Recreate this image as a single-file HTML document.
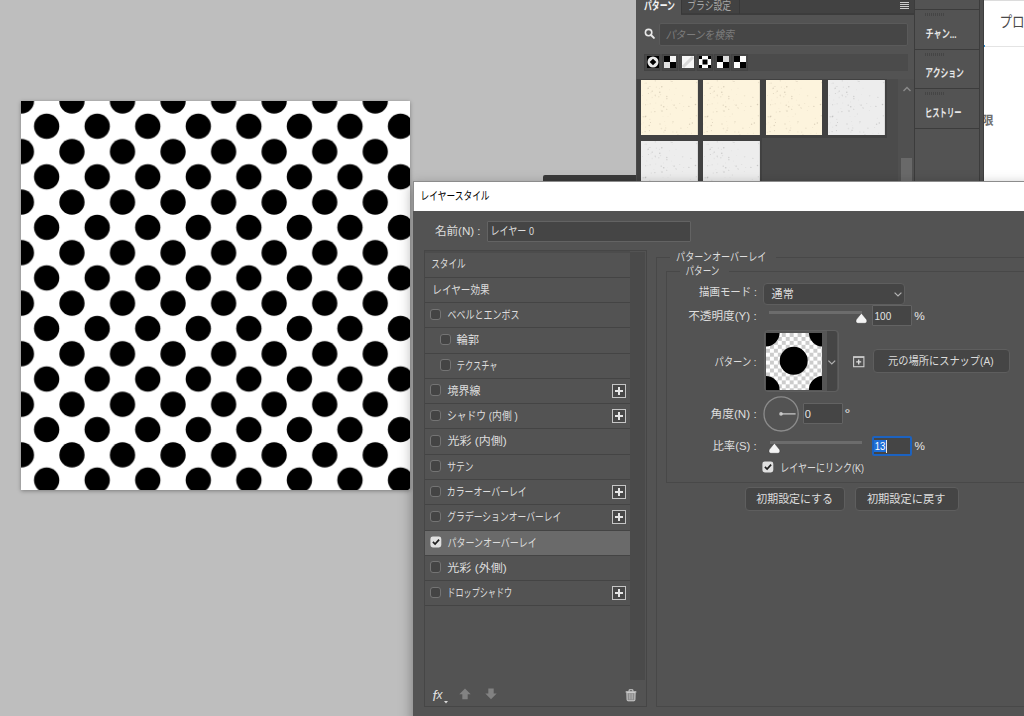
<!DOCTYPE html><html lang="ja"><head><meta charset="utf-8"><title>レイヤースタイル</title><style>

html,body{margin:0;padding:0;background:#bebebe;}
#root{position:relative;width:1024px;height:716px;overflow:hidden;background:#bebebe;font-family:"Liberation Sans",sans-serif;}
#root>div,#root>svg,#root>span{position:absolute;}
#root>svg{display:block;overflow:visible;}
.lt{font-size:11.5px;line-height:13px;color:#e6e6e6;white-space:nowrap;}
#tx{left:0;top:0;pointer-events:none;}
#tx .t{font-family:"Liberation Sans","Noto Sans CJK JP",sans-serif;font-size:11.5px;fill:#dddddd;}

</style></head><body><div id="root">
<div class="cv" style="left:21px;top:101px;width:389px;height:389px;background:#fff;box-shadow:0 1px 4px rgba(0,0,0,.35);"><svg width="389" height="389" style="display:block"><defs><pattern id="dots" x="0.4" y="0" width="50.55" height="50.55" patternUnits="userSpaceOnUse"><circle cx="0" cy="0" r="12.65"/><circle cx="50.55" cy="0" r="12.65"/><circle cx="0" cy="50.55" r="12.65"/><circle cx="50.55" cy="50.55" r="12.65"/><circle cx="25.275" cy="25.275" r="12.65"/></pattern></defs><rect width="389" height="389" fill="url(#dots)"/></svg></div>
<div style="left:543px;top:175px;width:94px;height:8px;background:#3a3a3a;border-radius:2px 0 0 0;"></div>
<div style="left:636px;top:0px;width:279px;height:182px;background:#535353;"></div>
<div style="left:636px;top:0px;width:279px;height:14px;background:#424242;"></div>
<div style="left:681px;top:13.4px;width:234px;height:1.2px;background:#3c3c3c;"></div>
<div style="left:636px;top:0px;width:45px;height:15px;background:#535353;"></div>
<div style="left:739px;top:0px;width:1px;height:14px;background:#383838;"></div>
<div style="left:681px;top:0px;width:1px;height:14px;background:#383838;"></div>
<div style="left:899.6px;top:2px;width:9.8px;height:1px;background:#cecece;"></div>
<div style="left:899.6px;top:4.02px;width:9.8px;height:1px;background:#cecece;"></div>
<div style="left:899.6px;top:6.04px;width:9.8px;height:1px;background:#cecece;"></div>
<div style="left:899.6px;top:8.06px;width:9.8px;height:1px;background:#cecece;"></div>
<div style="left:658.6px;top:23.1px;width:249px;height:22.5px;background:#464646;border:1.1px solid #5a5a5a;box-sizing:border-box;border-radius:2px;"></div>
<svg style="left:643px;top:27px" width="14" height="14" viewBox="0 0 14 14"><circle cx="5.6" cy="5.6" r="3.2" fill="none" stroke="#e8e8e8" stroke-width="1.6"/><path d="M8 8 L10.9 10.9" stroke="#e8e8e8" stroke-width="2" stroke-linecap="round"/></svg>
<div style="left:644px;top:54px;width:263.5px;height:16.5px;background:#4b4b4b;"></div>
<div style="left:644.2px;top:54px;width:16.3px;height:16.5px;background:#484848;border:1px solid #434343;box-sizing:border-box;"></div>
<div style="left:661.64px;top:54px;width:16.3px;height:16.5px;background:#484848;border:1px solid #434343;box-sizing:border-box;"></div>
<div style="left:679.08px;top:54px;width:16.3px;height:16.5px;background:#484848;border:1px solid #434343;box-sizing:border-box;"></div>
<div style="left:696.52px;top:54px;width:16.3px;height:16.5px;background:#484848;border:1px solid #434343;box-sizing:border-box;"></div>
<div style="left:713.96px;top:54px;width:16.3px;height:16.5px;background:#484848;border:1px solid #434343;box-sizing:border-box;"></div>
<div style="left:731.4px;top:54px;width:16.3px;height:16.5px;background:#484848;border:1px solid #434343;box-sizing:border-box;"></div>
<div style="left:636px;top:78.5px;width:262.5px;height:103.5px;background:#4b4b4b;"></div>
<div style="left:898.3px;top:78.5px;width:16.7px;height:103.5px;background:#505050;"></div>
<div style="left:900.9px;top:158px;width:11.4px;height:24px;background:#696969;"></div>
<svg style="left:902px;top:85px" width="10" height="8" viewBox="0 0 10 8"><path d="M1.5 6 L5 2.5 L8.5 6" fill="none" stroke="#8a8a8a" stroke-width="1.4"/></svg>
<svg style="left:0;top:0" width="0" height="0"><defs><g id="spk"><circle cx="18.5" cy="8.3" r="0.63" opacity="0.18"/><circle cx="30.5" cy="20.1" r="0.33" opacity="0.35"/><circle cx="2.1" cy="23.9" r="0.33" opacity="0.19"/><circle cx="24.2" cy="45.5" r="0.36" opacity="0.24"/><circle cx="35.8" cy="52.1" r="0.59" opacity="0.31"/><circle cx="55.6" cy="2.6" r="0.73" opacity="0.27"/><circle cx="8.2" cy="6.5" r="0.45" opacity="0.48"/><circle cx="10.3" cy="32.0" r="0.62" opacity="0.30"/><circle cx="31.2" cy="3.5" r="0.33" opacity="0.23"/><circle cx="38.8" cy="23.5" r="0.46" opacity="0.38"/><circle cx="25.8" cy="16.5" r="0.70" opacity="0.43"/><circle cx="13.9" cy="31.6" r="0.56" opacity="0.50"/><circle cx="41.6" cy="15.8" r="0.79" opacity="0.20"/><circle cx="23.8" cy="41.6" r="0.38" opacity="0.35"/><circle cx="2.2" cy="36.8" r="0.68" opacity="0.38"/><circle cx="49.9" cy="17.3" r="0.65" opacity="0.39"/><circle cx="33.1" cy="25.1" r="0.72" opacity="0.53"/><circle cx="27.0" cy="36.5" r="0.33" opacity="0.43"/><circle cx="36.9" cy="54.6" r="0.71" opacity="0.26"/><circle cx="22.0" cy="36.8" r="0.31" opacity="0.33"/><circle cx="9.6" cy="6.4" r="0.33" opacity="0.46"/><circle cx="7.4" cy="13.6" r="0.50" opacity="0.50"/><circle cx="4.6" cy="24.7" r="0.57" opacity="0.50"/><circle cx="46.7" cy="47.5" r="0.44" opacity="0.32"/><circle cx="20.4" cy="48.6" r="0.78" opacity="0.21"/><circle cx="10.0" cy="12.8" r="0.42" opacity="0.34"/><circle cx="33.6" cy="14.5" r="0.30" opacity="0.32"/><circle cx="21.0" cy="31.1" r="0.78" opacity="0.43"/><circle cx="29.4" cy="34.0" r="0.64" opacity="0.17"/><circle cx="51.3" cy="42.9" r="0.74" opacity="0.47"/><circle cx="22.4" cy="21.9" r="0.35" opacity="0.40"/><circle cx="3.5" cy="3.7" r="0.40" opacity="0.21"/><circle cx="19.4" cy="2.9" r="0.30" opacity="0.21"/><circle cx="5.8" cy="20.0" r="0.31" opacity="0.50"/><circle cx="35.0" cy="8.2" r="0.43" opacity="0.29"/><circle cx="20.8" cy="6.8" r="0.72" opacity="0.55"/><circle cx="26.6" cy="26.6" r="0.34" opacity="0.19"/><circle cx="19.5" cy="14.6" r="0.71" opacity="0.21"/><circle cx="1.3" cy="52.3" r="0.56" opacity="0.21"/><circle cx="31.0" cy="1.5" r="0.56" opacity="0.54"/><circle cx="49.2" cy="38.3" r="0.43" opacity="0.30"/><circle cx="9.5" cy="42.5" r="0.57" opacity="0.46"/><circle cx="18.8" cy="12.3" r="0.71" opacity="0.54"/><circle cx="48.6" cy="44.3" r="0.71" opacity="0.45"/><circle cx="12.9" cy="28.5" r="0.48" opacity="0.16"/><circle cx="1.6" cy="15.4" r="0.43" opacity="0.43"/><circle cx="54.5" cy="24.6" r="0.77" opacity="0.55"/><circle cx="54.4" cy="20.1" r="0.41" opacity="0.24"/><circle cx="11.2" cy="11.2" r="0.61" opacity="0.51"/><circle cx="47.9" cy="26.4" r="0.63" opacity="0.47"/><circle cx="4.8" cy="36.3" r="0.75" opacity="0.46"/><circle cx="42.8" cy="26.3" r="0.39" opacity="0.47"/><circle cx="19.0" cy="44.0" r="0.79" opacity="0.31"/><circle cx="22.9" cy="52.1" r="0.66" opacity="0.22"/><circle cx="7.2" cy="8.3" r="0.75" opacity="0.47"/><circle cx="8.3" cy="45.5" r="0.79" opacity="0.41"/><circle cx="20.0" cy="30.2" r="0.37" opacity="0.16"/><circle cx="55.3" cy="35.7" r="0.56" opacity="0.52"/><circle cx="24.7" cy="47.9" r="0.71" opacity="0.23"/><circle cx="14.4" cy="16.1" r="0.42" opacity="0.38"/><circle cx="14.8" cy="23.0" r="0.37" opacity="0.51"/><circle cx="20.2" cy="25.2" r="0.59" opacity="0.51"/><circle cx="24.0" cy="50.5" r="0.55" opacity="0.36"/><circle cx="29.8" cy="1.0" r="0.52" opacity="0.22"/><circle cx="0.2" cy="44.0" r="0.39" opacity="0.34"/><circle cx="41.3" cy="30.6" r="0.46" opacity="0.36"/><circle cx="31.7" cy="43.1" r="0.35" opacity="0.37"/><circle cx="14.2" cy="15.2" r="0.69" opacity="0.35"/><circle cx="32.0" cy="41.8" r="0.76" opacity="0.33"/><circle cx="34.9" cy="27.8" r="0.56" opacity="0.43"/><circle cx="25.8" cy="29.3" r="0.54" opacity="0.53"/><circle cx="39.9" cy="48.2" r="0.77" opacity="0.25"/><circle cx="31.9" cy="51.9" r="0.72" opacity="0.20"/><circle cx="6.9" cy="24.3" r="0.34" opacity="0.25"/><circle cx="4.2" cy="36.8" r="0.69" opacity="0.51"/><circle cx="8.8" cy="39.4" r="0.63" opacity="0.21"/><circle cx="50.3" cy="53.2" r="0.41" opacity="0.53"/><circle cx="22.7" cy="26.8" r="0.79" opacity="0.48"/><circle cx="9.2" cy="23.7" r="0.56" opacity="0.29"/><circle cx="11.2" cy="17.5" r="0.66" opacity="0.16"/><circle cx="31.6" cy="24.2" r="0.31" opacity="0.28"/><circle cx="35.6" cy="28.2" r="0.33" opacity="0.54"/><circle cx="44.9" cy="53.4" r="0.35" opacity="0.26"/><circle cx="2.3" cy="42.8" r="0.44" opacity="0.20"/><circle cx="24.1" cy="50.1" r="0.71" opacity="0.25"/><circle cx="8.5" cy="50.6" r="0.59" opacity="0.43"/><circle cx="5.1" cy="3.2" r="0.64" opacity="0.32"/><circle cx="4.1" cy="51.6" r="0.62" opacity="0.47"/><circle cx="4.8" cy="47.1" r="0.33" opacity="0.50"/><circle cx="25.9" cy="18.7" r="0.58" opacity="0.52"/><circle cx="15.3" cy="7.1" r="0.56" opacity="0.25"/><circle cx="6.2" cy="8.9" r="0.33" opacity="0.23"/><circle cx="17.8" cy="16.8" r="0.68" opacity="0.27"/><circle cx="28.5" cy="9.8" r="0.47" opacity="0.16"/><circle cx="14.3" cy="0.8" r="0.67" opacity="0.37"/></g></defs></svg>
<div style="left:637.3px;top:78.5px;width:249.5px;height:59px;background:#414141;"></div>
<div style="left:637.3px;top:138.3px;width:125px;height:44px;background:#414141;"></div>
<svg style="left:641px;top:79.9px;overflow:hidden" width="56.9" height="55"><rect width="100%" height="100%" fill="#fdf4dd"/><use href="#spk" fill="#b9ad98"/></svg>
<svg style="left:703.3px;top:79.9px;overflow:hidden" width="56.9" height="55"><rect width="100%" height="100%" fill="#fdf4dd"/><use href="#spk" fill="#b9ad98"/></svg>
<svg style="left:765.6px;top:79.9px;overflow:hidden" width="56.9" height="55"><rect width="100%" height="100%" fill="#fdf4dd"/><use href="#spk" fill="#b9ad98"/></svg>
<svg style="left:827.9px;top:79.9px;overflow:hidden" width="56.9" height="55"><rect width="100%" height="100%" fill="#ededed"/><use href="#spk" fill="#a8a8a8"/></svg>
<svg style="left:641px;top:140.8px;overflow:hidden" width="56.9" height="45"><rect width="100%" height="100%" fill="#ededed"/><use href="#spk" fill="#a8a8a8"/></svg>
<svg style="left:703.3px;top:140.8px;overflow:hidden" width="56.9" height="45"><rect width="100%" height="100%" fill="#ededed"/><use href="#spk" fill="#a8a8a8"/></svg>
<svg style="left:646.7px;top:56px" width="12" height="12" viewBox="0 0 12 12"><rect width="12" height="12" fill="#000"/><circle cx="6" cy="6" r="5.5" fill="#e9e9e9"/><path d="M6 2.7 L9.3 6 L6 9.3 L2.7 6 Z" fill="#000"/></svg>
<svg style="left:664.15px;top:56px" width="12" height="12" viewBox="0 0 12 12"><rect width="12" height="12" fill="#000"/><rect x="6" width="6" height="6" fill="#f4f4f4"/><rect y="6" width="6" height="6" fill="#e2e2e2"/></svg>
<svg style="left:681.6px;top:56px" width="12" height="12" viewBox="0 0 12 12"><rect width="12" height="12" fill="#f6f6f6"/><path d="M1 11 L11 1" stroke="#d8d8d8" stroke-width="3"/></svg>
<svg style="left:699.05px;top:56px" width="12" height="12" viewBox="0 0 12 12"><rect width="12" height="12" fill="#fff"/><rect width="3" height="3"/><rect x="9" width="3" height="3"/><rect y="9" width="3" height="3"/><rect x="9" y="9" width="3" height="3"/><rect x="3.5" y="3.5" width="5" height="5"/></svg>
<svg style="left:716.5px;top:56px" width="12" height="12" viewBox="0 0 12 12"><rect width="12" height="12" fill="#000"/><rect x="6" width="6" height="6" fill="#dcdcdc"/><rect y="6" width="6" height="6" fill="#fff"/></svg>
<svg style="left:733.95px;top:56px" width="12" height="12" viewBox="0 0 12 12"><rect width="12" height="12" fill="#000"/><rect x="6" width="6" height="6" fill="#fff"/><rect y="6" width="6" height="6" fill="#fff"/></svg>
<div style="left:914px;top:0px;width:66px;height:182px;background:#535353;border-left:1px solid #3c3c3c;border-right:1px solid #3c3c3c;box-sizing:border-box;"></div>
<div style="left:915px;top:9px;width:64px;height:1px;background:#3c3c3c;"></div>
<div style="left:915px;top:48.5px;width:64px;height:1px;background:#3c3c3c;"></div>
<div style="left:915px;top:88px;width:64px;height:1px;background:#3c3c3c;"></div>
<div style="left:915px;top:127.5px;width:64px;height:1px;background:#3c3c3c;"></div>
<div style="left:925px;top:13.2px;width:19px;height:3px;background:repeating-linear-gradient(90deg,#454545 0 1px,#535353 1px 2px);"></div>
<div style="left:925px;top:52.7px;width:19px;height:3px;background:repeating-linear-gradient(90deg,#454545 0 1px,#535353 1px 2px);"></div>
<div style="left:925px;top:92.2px;width:19px;height:3px;background:repeating-linear-gradient(90deg,#454545 0 1px,#535353 1px 2px);"></div>
<div style="left:980px;top:0px;width:4px;height:182px;background:#4f4f4f;"></div>
<div style="left:983.2px;top:0px;width:0.9px;height:182px;background:#3e3e3e;"></div>
<div style="left:984px;top:0px;width:40px;height:182px;background:#fff;"></div>
<div style="left:984px;top:0px;width:40px;height:1px;background:#dcdcdc;"></div>
<div style="left:984px;top:45.5px;width:40px;height:1px;background:#e4e4e4;"></div>
<div style="left:984px;top:45px;width:1px;height:2px;background:#2b8fd6;"></div>
<div class="dlg" style="left:413px;top:181px;width:620px;height:540px;background:#535353;box-shadow:0 5px 12px 1px rgba(0,0,0,.34);"></div>
<div style="left:413px;top:181px;width:613px;height:30px;background:#8c8c8c;"></div>
<div style="left:414px;top:182px;width:612px;height:29px;background:#fff;"></div>
<div style="left:487px;top:221px;width:204px;height:20.5px;background:#454545;border:1px solid #636363;box-sizing:border-box;border-radius:1px;"></div>
<div style="left:424px;top:250.3px;width:223px;height:456.5px;border:1px solid #464646;box-sizing:border-box;"></div>
<div style="left:425px;top:251.3px;width:204.7px;height:1.4px;background:#4c4c4c;"></div>
<div style="left:629.8px;top:251.6px;width:15.1px;height:428px;background:#4a4a4a;"></div>
<div style="left:425px;top:277px;width:204.7px;height:1px;background:#444444;"></div>
<div style="left:425px;top:302px;width:204.7px;height:1px;background:#444444;"></div>
<div style="left:425px;top:327px;width:204.7px;height:1px;background:#444444;"></div>
<div style="left:430.2px;top:308.675px;width:11.2px;height:11.5px;background:#444;border:1px solid #747474;box-sizing:border-box;border-radius:3px;"></div>
<div style="left:425px;top:353px;width:204.7px;height:1px;background:#444444;"></div>
<div style="left:440.3px;top:333.945px;width:11.2px;height:11.5px;background:#444;border:1px solid #747474;box-sizing:border-box;border-radius:3px;"></div>
<div style="left:425px;top:378px;width:204.7px;height:1px;background:#444444;"></div>
<div style="left:440.3px;top:359.215px;width:11.2px;height:11.5px;background:#444;border:1px solid #747474;box-sizing:border-box;border-radius:3px;"></div>
<div style="left:425px;top:403px;width:204.7px;height:1px;background:#444444;"></div>
<div style="left:430.2px;top:384.485px;width:11.2px;height:11.5px;background:#444;border:1px solid #747474;box-sizing:border-box;border-radius:3px;"></div>
<svg style="left:612px;top:383.985px" width="14" height="14" viewBox="0 0 14 14"><rect x=".5" y=".5" width="13" height="13" fill="#484848" stroke="#c6c6c6"/><path d="M3 7 H11 M7 3 V11" stroke="#e6e6e6" stroke-width="2"/></svg>
<div style="left:425px;top:428px;width:204.7px;height:1px;background:#444444;"></div>
<div style="left:430.2px;top:409.755px;width:11.2px;height:11.5px;background:#444;border:1px solid #747474;box-sizing:border-box;border-radius:3px;"></div>
<svg style="left:612px;top:409.255px" width="14" height="14" viewBox="0 0 14 14"><rect x=".5" y=".5" width="13" height="13" fill="#484848" stroke="#c6c6c6"/><path d="M3 7 H11 M7 3 V11" stroke="#e6e6e6" stroke-width="2"/></svg>
<div style="left:425px;top:454px;width:204.7px;height:1px;background:#444444;"></div>
<div style="left:430.2px;top:435.025px;width:11.2px;height:11.5px;background:#444;border:1px solid #747474;box-sizing:border-box;border-radius:3px;"></div>
<div style="left:425px;top:479px;width:204.7px;height:1px;background:#444444;"></div>
<div style="left:430.2px;top:460.295px;width:11.2px;height:11.5px;background:#444;border:1px solid #747474;box-sizing:border-box;border-radius:3px;"></div>
<div style="left:425px;top:504px;width:204.7px;height:1px;background:#444444;"></div>
<div style="left:430.2px;top:485.565px;width:11.2px;height:11.5px;background:#444;border:1px solid #747474;box-sizing:border-box;border-radius:3px;"></div>
<svg style="left:612px;top:485.065px" width="14" height="14" viewBox="0 0 14 14"><rect x=".5" y=".5" width="13" height="13" fill="#484848" stroke="#c6c6c6"/><path d="M3 7 H11 M7 3 V11" stroke="#e6e6e6" stroke-width="2"/></svg>
<div style="left:425px;top:530px;width:204.7px;height:1px;background:#444444;"></div>
<div style="left:430.2px;top:510.835px;width:11.2px;height:11.5px;background:#444;border:1px solid #747474;box-sizing:border-box;border-radius:3px;"></div>
<svg style="left:612px;top:510.335px" width="14" height="14" viewBox="0 0 14 14"><rect x=".5" y=".5" width="13" height="13" fill="#484848" stroke="#c6c6c6"/><path d="M3 7 H11 M7 3 V11" stroke="#e6e6e6" stroke-width="2"/></svg>
<div style="left:425px;top:531px;width:204.7px;height:24px;background:#6a6a6a;"></div>
<div style="left:425px;top:555px;width:204.7px;height:1px;background:#444444;"></div>
<svg style="left:430.1px;top:535.905px" width="12" height="12" viewBox="0 0 12 12"><rect x=".4" y=".5" width="10.9" height="10.9" rx="2.4" fill="#e0e0e0"/><path d="M2.9 5.9 L5.1 8.1 L9.1 3.6" fill="none" stroke="#1e1e1e" stroke-width="1.7"/></svg>
<div style="left:425px;top:580px;width:204.7px;height:1px;background:#444444;"></div>
<div style="left:430.2px;top:561.375px;width:11.2px;height:11.5px;background:#444;border:1px solid #747474;box-sizing:border-box;border-radius:3px;"></div>
<div style="left:425px;top:605px;width:204.7px;height:1px;background:#444444;"></div>
<div style="left:430.2px;top:586.645px;width:11.2px;height:11.5px;background:#444;border:1px solid #747474;box-sizing:border-box;border-radius:3px;"></div>
<svg style="left:612px;top:586.145px" width="14" height="14" viewBox="0 0 14 14"><rect x=".5" y=".5" width="13" height="13" fill="#484848" stroke="#c6c6c6"/><path d="M3 7 H11 M7 3 V11" stroke="#e6e6e6" stroke-width="2"/></svg>
<svg style="left:444.1px;top:700.6px" width="5" height="3" viewBox="0 0 5 3"><path d="M0 0 H4 L2 2.4 Z" fill="#dcdcdc"/></svg>
<svg style="left:458.9px;top:688.2px" width="12" height="12" viewBox="0 0 12 12"><path d="M6 .4 L11.7 6.2 H8.7 V11.2 H3.3 V6.2 H.3 Z" fill="#828282"/></svg>
<svg style="left:485.3px;top:688.2px" width="12" height="12" viewBox="0 0 12 12"><path d="M6 11.2 L11.7 5.4 H8.7 V.5 H3.3 V5.4 H.3 Z" fill="#828282"/></svg>
<svg style="left:625px;top:688.6px" width="12" height="13" viewBox="0 0 12 13"><path d="M4.1 2.4 V1.5 Q4.1 .8 4.8 .8 H7.2 Q7.9 .8 7.9 1.5 V2.4" fill="none" stroke="#cfcfcf" stroke-width="1.1"/><rect x=".7" y="2.3" width="10.6" height="1.3" fill="#d6d6d6"/><path d="M1.9 3.6 H10.1 L9.9 10.9 Q9.9 11.8 9 11.8 H3 Q2.1 11.8 2.1 10.9 Z" fill="#8c8c8c" stroke="#d0d0d0" stroke-width="1"/><path d="M4.5 4.6 V10.4 M6 4.6 V10.4 M7.5 4.6 V10.4" stroke="#b4b4b4" stroke-width=".7"/></svg>
<div style="left:656.1px;top:256.5px;width:380px;height:450.3px;border:1px solid #484848;box-sizing:border-box;"></div>
<div style="left:670px;top:252px;width:106px;height:10px;background:#535353;"></div>
<div style="left:665.6px;top:271px;width:370px;height:212px;border:1px solid #484848;box-sizing:border-box;"></div>
<div style="left:680px;top:266px;width:49px;height:10px;background:#535353;"></div>
<div style="left:762.9px;top:283px;width:142.6px;height:21.7px;background:#454545;border:1px solid #5e5e5e;box-sizing:border-box;border-radius:4px;"></div>
<svg style="left:893px;top:291px" width="10" height="7" viewBox="0 0 10 7"><path d="M1.6 1.6 L5 5 L8.4 1.6" fill="none" stroke="#b4b4b4" stroke-width="1.2"/></svg>
<div style="left:769.4px;top:311px;width:92.3px;height:2.5px;background:#6c6c6c;"></div>
<svg style="left:856.4px;top:312.6px" width="11" height="11" viewBox="0 0 11 11"><path d="M5.4 .3 L10.3 6.2 Q10.8 6.9 10.8 7.6 V8.6 Q10.8 10.3 9 10.3 H1.8 Q0 10.3 0 8.6 V7.6 Q0 6.9 .5 6.2 Z" fill="#f4f4f4" stroke="#3c3c3c" stroke-width=".5"/></svg>
<div style="left:871.7px;top:305.4px;width:40.2px;height:20.3px;background:#454545;border:1px solid #636363;box-sizing:border-box;border-radius:1px;"></div>
<div style="left:764px;top:330.1px;width:74.5px;height:62.4px;background:#565656;border:1px solid #5f5f5f;box-sizing:border-box;border-radius:4px;"></div>
<svg style="left:765.6px;top:333px;overflow:hidden" width="56.5" height="56.6" viewBox="0 0 56.5 56.6"><defs><pattern id="chk" width="7.9" height="7.9" patternUnits="userSpaceOnUse"><rect width="7.9" height="7.9" fill="#fff"/><rect width="3.95" height="3.95" fill="#ccc"/><rect x="3.95" y="3.95" width="3.95" height="3.95" fill="#ccc"/></pattern></defs><rect width="57" height="57" fill="url(#chk)"/><circle cx="27.7" cy="27.8" r="14"/><circle cx="-.4" cy="-.4" r="14"/><circle cx="56.9" cy="-.4" r="14"/><circle cx="-.4" cy="57" r="14"/><circle cx="56.9" cy="57" r="14"/></svg>
<div style="left:827.3px;top:331.4px;width:10px;height:59.8px;background:#454545;border-radius:0 3px 3px 0;"></div>
<svg style="left:827.3px;top:358.7px" width="10" height="7" viewBox="0 0 10 7"><path d="M1.4 1.6 L4.8 5 L8.2 1.6" fill="none" stroke="#b0b0b0" stroke-width="1.2"/></svg>
<svg style="left:852.7px;top:356px" width="12" height="12" viewBox="0 0 12 12"><rect x=".6" y=".7" width="10.3" height="10" fill="none" stroke="#cecece" stroke-width="1.1"/><path d="M.6 1.4 H10.9" stroke="#cecece" stroke-width="1"/><path d="M3.2 5.9 H8.2 M5.7 3.4 V8.4" stroke="#e0e0e0" stroke-width="1.3"/></svg>
<div style="left:872.7px;top:349px;width:137.2px;height:23.5px;background:#454545;border:1px solid #5e5e5e;box-sizing:border-box;border-radius:4px;"></div>
<svg style="left:763px;top:396px" width="36" height="36" viewBox="0 0 36 36"><circle cx="18.1" cy="17.9" r="17.1" fill="none" stroke="#8c8c8c" stroke-width="1.3"/><circle cx="18" cy="17.9" r="1.8" fill="#c4c4c4"/><path d="M18 17.9 H32.6" stroke="#d0d0d0" stroke-width="1.2"/></svg>
<div style="left:802.6px;top:403.3px;width:40.4px;height:20.9px;background:#454545;border:1px solid #636363;box-sizing:border-box;border-radius:1px;"></div>
<div style="left:769.6px;top:441px;width:92.2px;height:2.5px;background:#6c6c6c;"></div>
<svg style="left:769px;top:443.2px" width="11" height="11" viewBox="0 0 11 11"><path d="M5.4 .3 L10.3 6.2 Q10.8 6.9 10.8 7.6 V8.6 Q10.8 10.3 9 10.3 H1.8 Q0 10.3 0 8.6 V7.6 Q0 6.9 .5 6.2 Z" fill="#f4f4f4" stroke="#3c3c3c" stroke-width=".5"/></svg>
<div style="left:871.7px;top:435.5px;width:40.5px;height:20.6px;background:#454545;border:2px solid #1c62c0;box-sizing:border-box;border-radius:2px;"></div>
<div style="left:874.2px;top:440.2px;width:11.6px;height:12px;background:#1f6fd8;"></div>
<div style="left:886px;top:439.5px;width:1px;height:13px;background:#e8e8e8;"></div>
<svg style="left:762.4px;top:461.2px" width="12" height="12" viewBox="0 0 12 12"><rect x=".4" y=".5" width="10.9" height="10.9" rx="2.4" fill="#e0e0e0"/><path d="M2.9 5.9 L5.1 8.1 L9.1 3.6" fill="none" stroke="#1e1e1e" stroke-width="1.7"/></svg>
<div style="left:744.7px;top:487.4px;width:100.7px;height:23.3px;background:#454545;border:1px solid #5e5e5e;box-sizing:border-box;border-radius:4px;"></div>
<div style="left:855px;top:487.4px;width:104.4px;height:23.3px;background:#454545;border:1px solid #5e5e5e;box-sizing:border-box;border-radius:4px;"></div>
<svg id="tx" width="1024" height="716" viewBox="0 0 1024 716">
<text class="t" x="643.9" y="10.3" style="fill:#f4f4f4;font-weight:bold" textLength="31.1" lengthAdjust="spacingAndGlyphs">パターン</text>
<text class="t" x="687.2" y="10.3" style="fill:#a6a6a6" textLength="43.9" lengthAdjust="spacingAndGlyphs">ブラシ設定</text>
<text class="t" x="665.4" y="38.7" style="fill:#7c7c7c;font-style:italic" textLength="68.6" lengthAdjust="spacingAndGlyphs">パターンを検索</text>
<text class="t" x="925.6" y="37.7" style="fill:#e6e6e6;font-weight:bold" textLength="31" lengthAdjust="spacingAndGlyphs">チャン...</text>
<text class="t" x="925.3" y="77.3" style="fill:#e6e6e6;font-weight:bold" textLength="38.6" lengthAdjust="spacingAndGlyphs">アクション</text>
<text class="t" x="925" y="116.8" style="fill:#e6e6e6;font-weight:bold" textLength="36.5" lengthAdjust="spacingAndGlyphs">ヒストリー</text>
<text class="t" x="999.4" y="27" style="fill:#4a4a4a;font-size:14.5px" textLength="25.2" lengthAdjust="spacingAndGlyphs">プロ</text>
<clipPath id="cl1"><rect x="984" y="100" width="40" height="40"/></clipPath><g clip-path="url(#cl1)"><text class="t" x="981.3" y="124.5" style="fill:#6e6e6e;font-size:12.4px;font-weight:bold">限</text></g>
<text class="t" x="420.6" y="200.1" style="fill:#000" textLength="69" lengthAdjust="spacingAndGlyphs">レイヤースタイル</text>
<text class="t" x="434.9" y="234.8" textLength="45.7" lengthAdjust="spacingAndGlyphs">名前(N) :</text>
<text class="t" x="490.4" y="235.1" textLength="43.6" lengthAdjust="spacingAndGlyphs">レイヤー 0</text>
<text class="t" x="431.2" y="268.3" textLength="34.5" lengthAdjust="spacingAndGlyphs">スタイル</text>
<text class="t" x="432.3" y="293.6" textLength="57.4" lengthAdjust="spacingAndGlyphs">レイヤー効果</text>
<text class="t" x="447.5" y="319.1" textLength="71.9" lengthAdjust="spacingAndGlyphs">ベベルとエンボス</text>
<text class="t" x="456.5" y="344.4" textLength="22.6" lengthAdjust="spacingAndGlyphs">輪郭</text>
<text class="t" x="456.8" y="369.6" textLength="40.8" lengthAdjust="spacingAndGlyphs">テクスチャ</text>
<text class="t" x="447.4" y="394.9" textLength="33" lengthAdjust="spacingAndGlyphs">境界線</text>
<text class="t" x="446.9" y="420.2" textLength="70.8" lengthAdjust="spacingAndGlyphs">シャドウ (内側 )</text>
<text class="t" x="447.4" y="445.4" textLength="59.4" lengthAdjust="spacingAndGlyphs">光彩 (内側)</text>
<text class="t" x="447.2" y="470.7" textLength="26.2" lengthAdjust="spacingAndGlyphs">サテン</text>
<text class="t" x="446.8" y="496" textLength="79.9" lengthAdjust="spacingAndGlyphs">カラーオーバーレイ</text>
<text class="t" x="447.3" y="521.2" textLength="114.1" lengthAdjust="spacingAndGlyphs">グラデーションオーバーレイ</text>
<text class="t" x="447.5" y="546.5" textLength="89.2" lengthAdjust="spacingAndGlyphs">パターンオーバーレイ</text>
<text class="t" x="447.3" y="571.8" textLength="59.4" lengthAdjust="spacingAndGlyphs">光彩 (外側)</text>
<text class="t" x="447.3" y="597.1" textLength="64.9" lengthAdjust="spacingAndGlyphs">ドロップシャドウ</text>
<text x="432.5" y="700.5" font-family="Liberation Sans, sans-serif" font-style="italic" font-size="14.5" fill="#dedede">f<tspan font-size="12" dy="-1.1">x</tspan></text>
<text class="t" x="676.1" y="261" textLength="90.2" lengthAdjust="spacingAndGlyphs">パターンオーバーレイ</text>
<text class="t" x="685.5" y="275.1" textLength="33.9" lengthAdjust="spacingAndGlyphs">パターン</text>
<text class="t" x="699.1" y="296.1" textLength="57.8" lengthAdjust="spacingAndGlyphs">描画モード :</text>
<text class="t" x="771.6" y="297.9" textLength="22.1" lengthAdjust="spacingAndGlyphs">通常</text>
<text class="t" x="688.2" y="319.6" textLength="68.5" lengthAdjust="spacingAndGlyphs">不透明度(Y) :</text>
<text transform="translate(874.54 319.90) scale(0.882 1)" font-family="Liberation Sans, sans-serif" font-size="11.31" fill="#e4e4e4">100</text><text transform="translate(914.28 319.90) scale(1.016 1)" font-family="Liberation Sans, sans-serif" font-size="11.67" fill="#e4e4e4">%</text>
<text class="t" x="714.4" y="366" textLength="42" lengthAdjust="spacingAndGlyphs">パターン :</text>
<text class="t" x="888.1" y="364.9" textLength="105.6" lengthAdjust="spacingAndGlyphs">元の場所にスナップ(A)</text>
<text class="t" x="710.6" y="417.5" textLength="46.1" lengthAdjust="spacingAndGlyphs">角度(N) :</text>
<text transform="translate(804.77 417.90) scale(0.980 1)" font-family="Liberation Sans, sans-serif" font-size="11.31" fill="#e4e4e4">0</text><text transform="translate(844.53 418.40) scale(1.231 1)" font-family="Liberation Sans, sans-serif" font-size="11.89" fill="#e4e4e4">°</text>
<text class="t" x="712.4" y="449.9" textLength="44.3" lengthAdjust="spacingAndGlyphs">比率(S) :</text>
<text transform="translate(874.67 449.70) scale(0.836 1)" font-family="Liberation Sans, sans-serif" font-size="11.46" fill="#ffffff">13</text><text transform="translate(914.38 449.70) scale(1.005 1)" font-family="Liberation Sans, sans-serif" font-size="11.67" fill="#e4e4e4">%</text>
<text class="t" x="780.3" y="471.5" textLength="83.6" lengthAdjust="spacingAndGlyphs">レイヤーにリンク(K)</text>
<text class="t" x="756.3" y="503.1" textLength="76.7" lengthAdjust="spacingAndGlyphs">初期設定にする</text>
<text class="t" x="866.9" y="503.1" textLength="78.6" lengthAdjust="spacingAndGlyphs">初期設定に戻す</text>
</svg>
</div></body></html>
